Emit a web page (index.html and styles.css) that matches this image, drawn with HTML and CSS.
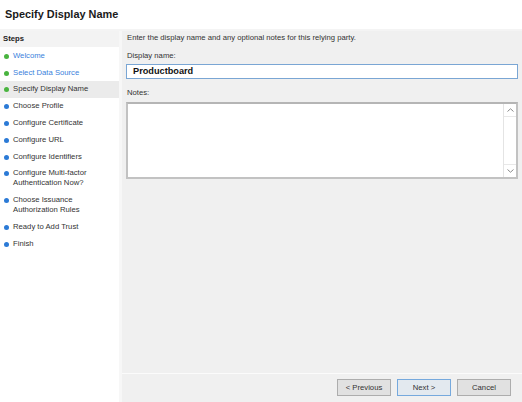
FILE: index.html
```html
<!DOCTYPE html>
<html>
<head>
<meta charset="utf-8">
<link rel="stylesheet" href="styles.css">
</head>
<body>
<div class="window">
  <div class="header"><span class="title">Specify Display Name</span></div>
  <div class="main">
    <div class="steps">
      <div class="steps-head">Steps</div>
      <div class="step done link"><span class="dot green"></span><span class="label">Welcome</span></div>
      <div class="step done link"><span class="dot green"></span><span class="label">Select Data Source</span></div>
      <div class="step current"><span class="dot green"></span><span class="label">Specify Display Name</span></div>
      <div class="step"><span class="dot blue"></span><span class="label">Choose Profile</span></div>
      <div class="step"><span class="dot blue"></span><span class="label">Configure Certificate</span></div>
      <div class="step"><span class="dot blue"></span><span class="label">Configure URL</span></div>
      <div class="step"><span class="dot blue"></span><span class="label">Configure Identifiers</span></div>
      <div class="step"><span class="dot blue"></span><span class="label">Configure Multi-factor<br>Authentication Now?</span></div>
      <div class="step"><span class="dot blue"></span><span class="label">Choose Issuance<br>Authorization Rules</span></div>
      <div class="step"><span class="dot blue"></span><span class="label">Ready to Add Trust</span></div>
      <div class="step"><span class="dot blue"></span><span class="label">Finish</span></div>
    </div>
    <div class="content">
      <div class="form">
        <div class="intro">Enter the display name and any optional notes for this relying party.</div>
        <div class="field-label">Display name:</div>
        <div class="input">Productboard</div>
        <div class="field-label notes-label">Notes:</div>
        <div class="textarea">
          <div class="text-body"></div>
          <div class="scrollbar">
            <div class="sb-btn">
              <svg width="7" height="4" viewBox="0 0 7 4"><path d="M0.5 3.5 L3.5 0.8 L6.5 3.5" fill="none" stroke="#8a8a8a" stroke-width="1"/></svg>
            </div>
            <div class="sb-track"></div>
            <div class="sb-btn">
              <svg width="7" height="4" viewBox="0 0 7 4"><path d="M0.5 0.5 L3.5 3.2 L6.5 0.5" fill="none" stroke="#8a8a8a" stroke-width="1"/></svg>
            </div>
          </div>
        </div>
      </div>
      <div class="footer">
        <button class="btn">&lt; Previous</button>
        <button class="btn primary">Next &gt;</button>
        <button class="btn">Cancel</button>
      </div>
    </div>
  </div>
</div>
</body>
</html>
```
FILE: styles.css
```css
html, body {
  margin: 0;
  padding: 0;
}
body {
  width: 522px;
  height: 402px;
  overflow: hidden;
  font-family: "Liberation Sans", Arial, sans-serif;
  font-size: 7.7px;
  color: #333;
  background: #fff;
}
.window {
  display: flex;
  flex-direction: column;
  height: 402px;
}
.header {
  height: 29px;
  display: flex;
  align-items: center;
  padding-left: 5px;
  background: #fff;
  border-bottom: 2px solid #f4f4f4;
}
.title {
  font-weight: bold;
  font-size: 10.9px;
  color: #1a1a1a;
  position: relative;
  top: -1px;
}
.main {
  flex: 1;
  display: flex;
  min-height: 0;
}
.steps {
  width: 119px;
  background: #fff;
  border-right: 3px solid #f7f7f7;
  flex-shrink: 0;
}
.steps-head {
  height: 16px;
  line-height: 16px;
  background: #f3f3f3;
  font-weight: bold;
  padding-left: 3px;
  color: #222;
  margin-bottom: 0.5px;
}
.step {
  display: flex;
  align-items: flex-start;
  padding: 3.4px 0 3.4px 4px;
  line-height: 10px;
}
.step.current {
  background: #ebebeb;
}
.step.link .label {
  color: #3a7fdc;
}
.dot {
  width: 5px;
  height: 5px;
  border-radius: 50%;
  margin-top: 3px;
  margin-right: 4px;
  flex-shrink: 0;
}
.dot.green { background: #49b43f; }
.dot.blue { background: #2b7ad6; }
.content {
  flex: 1;
  background: #f0f0f0;
  display: flex;
  flex-direction: column;
}
.form {
  flex: 1;
  padding: 2px 4px 0 4px;
}
.intro {
  line-height: 10px;
  margin-bottom: 8px;
  padding-left: 1px;
}
.field-label {
  line-height: 10px;
  padding-left: 1px;
  margin-bottom: 3px;
}
.notes-label {
  margin-top: 9px;
  margin-bottom: 4px;
}
.input {
  height: 13px;
  line-height: 13px;
  border: 1px solid #7aa6d4;
  background: #fff;
  font-weight: bold;
  font-size: 9.2px;
  color: #111;
  padding-left: 6px;
}
.textarea {
  height: 73px;
  border: 2px solid #c2c2c2;
  border-top-color: #b5b5b5;
  background: #fff;
  display: flex;
}
.text-body {
  flex: 1;
}
.scrollbar {
  width: 12px;
  border-left: 1px solid #e4e4e4;
  display: flex;
  flex-direction: column;
  background: #fff;
}
.sb-btn {
  height: 12px;
  display: flex;
  align-items: center;
  justify-content: center;
}
.sb-track {
  flex: 1;
  border-top: 1px solid #e8e8e8;
  border-bottom: 1px solid #e8e8e8;
}
.footer {
  border-top: 1px solid #fbfbfb;
  display: flex;
  justify-content: flex-end;
  gap: 6px;
  padding: 5px 11px 6px 0;
}
.btn {
  width: 54px;
  height: 17px;
  margin: 0;
  padding: 0;
  font-family: "Liberation Sans", Arial, sans-serif;
  font-size: 7.7px;
  color: #333;
  background: #e1e1e1;
  border: 1px solid #adadad;
  border-radius: 0;
}
.btn.primary {
  border-color: #76a9dd;
  background: #e3e9ef;
}
```
